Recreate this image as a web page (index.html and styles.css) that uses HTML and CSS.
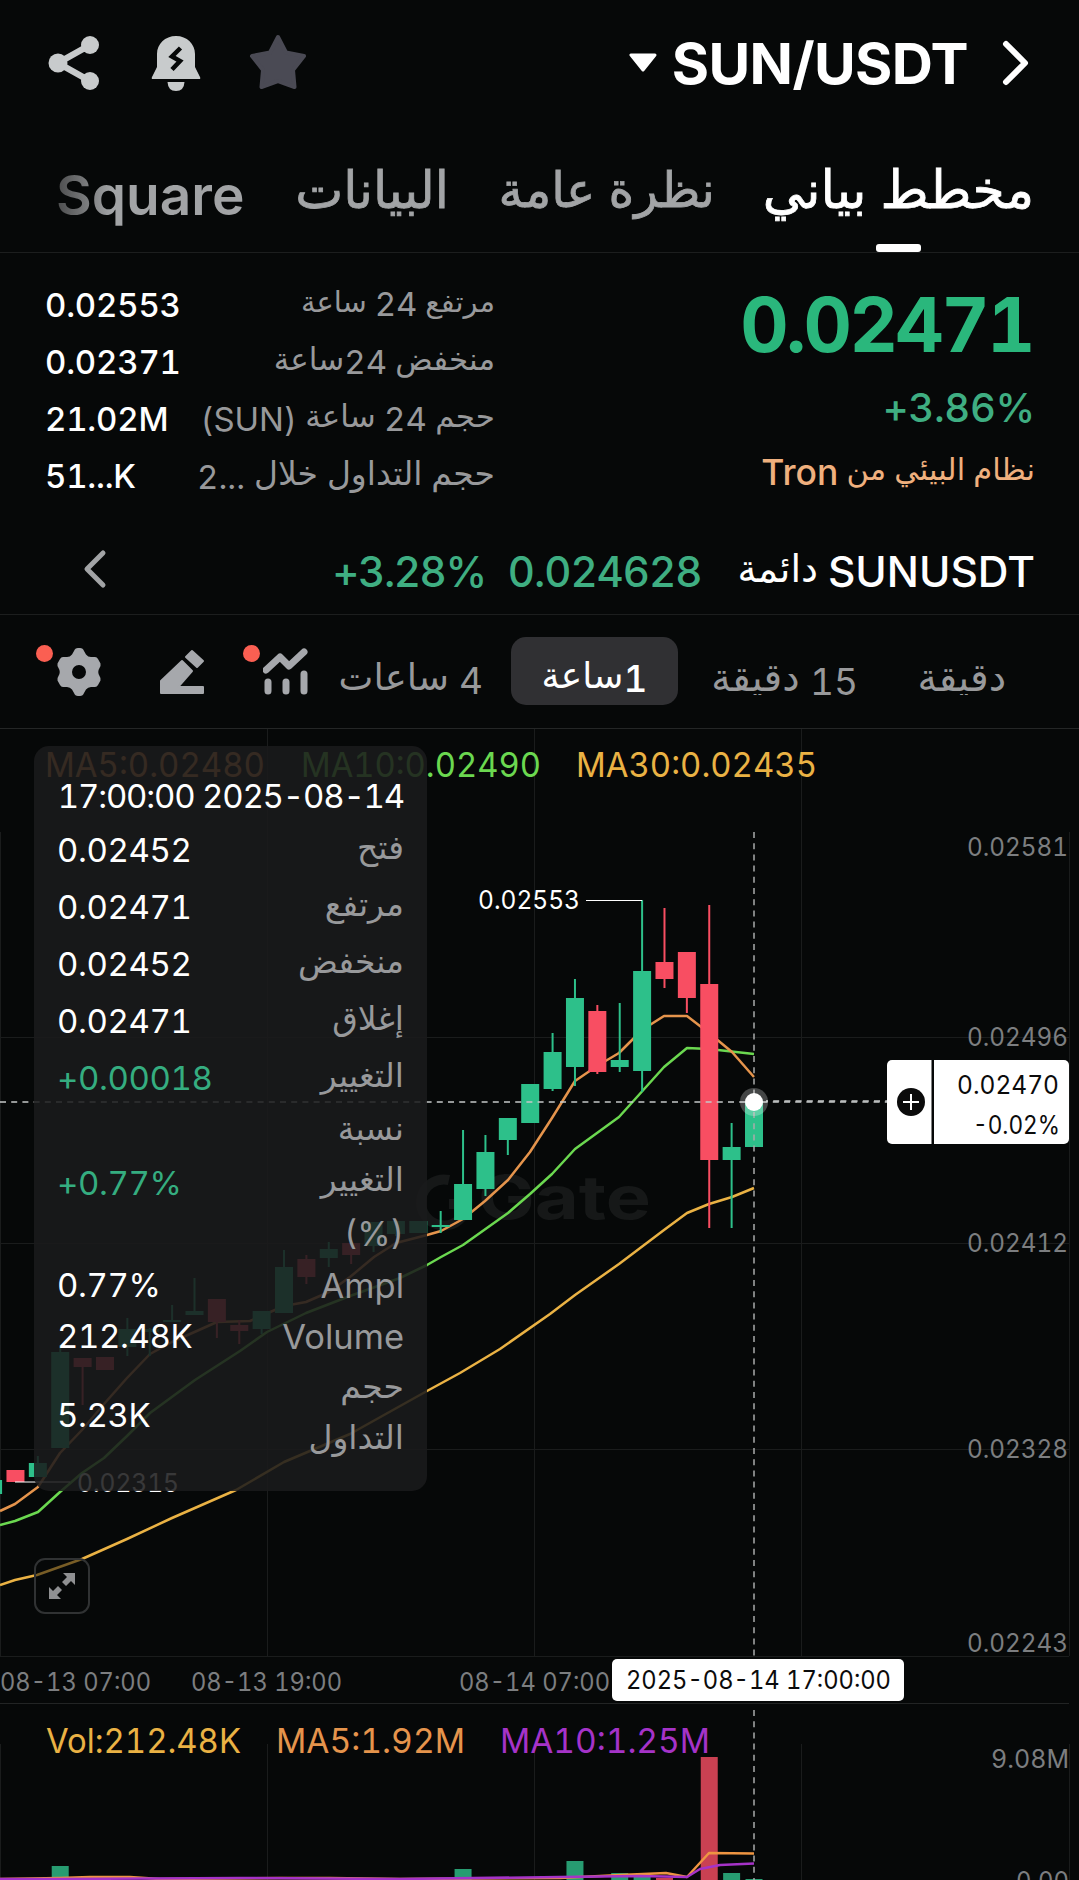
FILE: index.html
```html
<!DOCTYPE html>
<html lang="ar" dir="rtl">
<head>
    <meta charset="UTF-8">
    <meta name="viewport" content="width=device-width, initial-scale=1.0">
    <title>SUN/USDT</title>
    <link rel="stylesheet" href="styles.css">
</head>
<body>
    <header class="header">
        <svg class="back" width="30" height="46" viewBox="0 0 30 46"><path d="M5 4 L24 23 L5 42" /></svg>
        <h1 class="pair" dir="ltr">SUN/USDT</h1>
        <svg class="caret" width="28" height="20" viewBox="0 0 28 20"><path d="M2 2 H26 L14 17 Z" /></svg>
        <div class="header-icons">
            <svg width="58" height="58" viewBox="0 0 58 58" fill="#4a4a54" stroke="#4a4a54" stroke-width="4" stroke-linejoin="round"><path d="M29 3 L37 18.500 L55 22 L44 36 L45.500 53 L29 47 L12.500 53 L14 36 L3 22 L21 18.500 Z" /></svg>
            <svg class="bell" width="50" height="56" viewBox="0 0 50 56" fill="#c8cbcc">
                <path d="M25 1 C36 1 44 9 44 19 V32 L49 42 Q50 44 48 44 H2 Q0 44 1 42 L6 32 V19 C6 9 14 1 25 1 Z" />
                <path d="M16.500 47 H33.500 Q33 56 25 56 Q17 56 16.500 47 Z" />
                <path d="M29.500 13 L21 21.500 L29 26 L21 34.500" fill="none" stroke="#060808" stroke-width="4.500" />
            </svg>
            <svg class="share" width="52" height="56" viewBox="0 0 52 56" fill="#c8cbcc">
                <path d="M42 10 L10 28 L42 46" fill="none" stroke="#c8cbcc" stroke-width="6.500" />
                <circle cx="42" cy="10" r="9" /><circle cx="10" cy="28" r="9.500" /><circle cx="42" cy="46" r="9" />
            </svg>
        </div>
    </header>

    <nav class="tabs">
        <a class="tab active">مخطط بياني</a>
        <a class="tab overview">نظرة عامة</a>
        <a class="tab data">البيانات</a>
        <a class="tab square">Square</a>
    </nav>

    <section class="summary">
        <div class="price-box">
            <div class="price" dir="ltr">0.02471</div>
            <div class="change" dir="ltr">+3.86%</div>
            <div class="tag">نظام البيئي من <span class="latin">Tron</span></div>
        </div>
        <div class="stats">
            <div class="stat"><span class="label">مرتفع <span class="num">24</span> ساعة</span><b dir="ltr">0.02553</b></div>
            <div class="stat"><span class="label mid">منخفض <span class="num">24</span>ساعة</span><b dir="ltr">0.02371</b></div>
            <div class="stat"><span class="label mid">حجم <span class="num">24</span> ساعة <span class="num">(SUN)</span></span><b dir="ltr">21.02M</b></div>
            <div class="stat"><span class="label wide">حجم التداول خلال <span class="num" dir="ltr">2...</span></span><b dir="ltr">51...K</b></div>
        </div>
    </section>

    <section class="perp">
        <span class="perp-name">SUNUSDT</span>
        <span class="perp-type">دائمة</span>
        <span class="perp-price">0.024628</span>
        <span class="perp-change" dir="ltr">+3.28%</span>
        <svg class="perp-more" width="24" height="40" viewBox="0 0 24 40"><path d="M20 4 L4 20 L20 36" /></svg>
    </section>

    <section class="toolbar">
        <span class="period minute">دقيقة</span>
        <span class="period quarter"><span class="num">15</span> دقيقة</span>
        <span class="period selected"><span class="num">1</span>ساعة</span>
        <span class="period four"><span class="num">4</span> ساعات</span>
        <div class="tool tool-chart">
            <svg width="46" height="48" viewBox="0 0 46 48" fill="none" stroke="#a6a8ac">
                <path d="M3 22 L17 9 L26 18 L41 4" stroke-width="7" stroke-linecap="round" stroke-linejoin="round" />
                <path d="M5 34 V43 M23 34 V43 M41 26 V43" stroke-width="7" stroke-linecap="round" />
            </svg>
            <i class="dot"></i>
        </div>
        <div class="tool tool-pen">
            <svg width="46" height="48" viewBox="0 0 46 48" fill="#a6a8ac" stroke="#a6a8ac" stroke-width="2" stroke-linejoin="round">
                <path d="M1 45 V33 L22 13 L32 23 L18 39 H43 V45 Z" />
                <path d="M26 9 L32 3 L43 13 L37 19 Z" />
            </svg>
        </div>
        <div class="tool tool-gear">
            <svg width="46" height="48" viewBox="0 0 46 48">
                <path fill="#a6a8ac" fill-rule="evenodd" d="M18 3 Q19 0 22 0 H24 Q27 0 28 3 L30 6.500 Q32 9 35 9 H39 Q41 9 42 11 L44.500 15.500 Q45 18 43.500 20 Q41 24 43.500 28 Q45 30 44.500 32.500 L42 37 Q41 39 39 39 H35 Q32 39 30 41.500 L28 45 Q27 48 24 48 H22 Q19 48 18 45 L16 41.500 Q14 39 11 39 H7 Q5 39 4 37 L1.500 32.500 Q1 30 2.500 28 Q5 24 2.500 20 Q1 18 1.500 15.500 L4 11 Q5 9 7 9 H11 Q14 9 16 6.500 Z M23 17 A7 7 0 1 0 23 31 A7 7 0 1 0 23 17 Z" />
            </svg>
            <i class="dot"></i>
        </div>
    </section>

    <main class="chart-area" dir="ltr">
        <svg id="chart" class="chart" width="1079" height="1151" viewBox="0 729 1079 1151"></svg>

        <div class="tooltip" dir="rtl">
            <div class="tip-title" dir="ltr">17:00:00 2025-08-14</div>
            <div class="tip-row"><span>فتح</span><b dir="ltr">0.02452</b></div>
            <div class="tip-row"><span>مرتفع</span><b dir="ltr">0.02471</b></div>
            <div class="tip-row"><span>منخفض</span><b dir="ltr">0.02452</b></div>
            <div class="tip-row"><span>إغلاق</span><b dir="ltr">0.02471</b></div>
            <div class="tip-row"><span>التغيير</span><b class="up" dir="ltr">+0.00018</b></div>
            <div class="tip-row tall"><span>نسبة<br>التغيير<br><span class="percent">(%)</span></span><b class="up" dir="ltr">+0.77%</b></div>
            <div class="tip-row short"><span class="latin">Ampl</span><b dir="ltr">0.77%</b></div>
            <div class="tip-row short"><span class="latin">Volume</span><b dir="ltr">212.48K</b></div>
            <div class="tip-row double"><span>حجم<br>التداول</span><b dir="ltr">5.23K</b></div>
        </div>

        <button class="expand">
            <svg width="28" height="28" viewBox="0 0 28 28" fill="#8f9092">
                <path d="M15 1 H27 V13 L23 9 L18 14 L14 10 L19 5 Z" />
                <path d="M13 27 H1 V15 L5 19 L10 14 L14 18 L9 23 Z" />
            </svg>
        </button>
    </main>

    <script src="chart.js"></script>
</body>
</html>
```
FILE: styles.css
```css
* {
    box-sizing: border-box;
}

body {
    margin: 0;
    width: 1079px;
    height: 1880px;
    overflow: hidden;
    background-color: #060808;
    color: #fff;
    font-family: Inter, "DejaVu Sans", sans-serif;
    font-feature-settings: "tnum";
}

b {
    font-weight: 500;
}

.header {
    display: flex;
    align-items: center;
    height: 126px;
    padding: 0 48px 0 48px;
}

.back path {
    fill: none;
    stroke: #fff;
    stroke-width: 6;
    stroke-linecap: round;
    stroke-linejoin: round;
}

.pair {
    margin: 0 33px 0 0;
    padding-top: 2px;
    font-size: 57px;
    line-height: 70px;
    font-weight: 700;
    letter-spacing: -0.6px;
}

.caret {
    margin-right: 15px;
}

.caret path {
    fill: #fff;
    stroke: #fff;
    stroke-width: 3;
    stroke-linejoin: round;
}

.header-icons {
    display: flex;
    align-items: center;
    margin-right: auto;
}

.bell {
    margin-right: 48px;
}

.share {
    margin-right: 51px;
}

.tabs {
    display: flex;
    height: 127px;
    padding: 0 45px 0 56px;
    border-bottom: 1px solid #1c1e1e;
}

.tab {
    position: relative;
    height: 126px;
    line-height: 128px;
    font-size: 49px;
    font-weight: 400;
    -webkit-text-stroke: 0.8px currentColor;
    color: #a2a4a6;
    white-space: nowrap;
}

.tab.active {
    width: 271px;
    font-size: 52px;
    color: #fff;
}

.tab.active::after {
    content: "";
    position: absolute;
    left: 50%;
    bottom: 0;
    width: 45px;
    height: 8px;
    margin-left: -23px;
    border-radius: 3px;
    background-color: #fff;
}

.overview {
    width: 215px;
    margin-right: 48px;
}

.data {
    width: 154px;
    margin-right: 51px;
    font-size: 51px;
}

.square {
    margin-right: auto;
    font-size: 55px;
    line-height: 139px;
    font-weight: 600;
    -webkit-text-stroke: 0;
    background: linear-gradient(to right, #4a4b4c, #a2a4a6 56px);
    -webkit-background-clip: text;
    color: transparent;
}

.summary {
    display: flex;
    justify-content: space-between;
    height: 270px;
    padding: 22px 44px 0 45px;
}

.price {
    height: 102px;
    line-height: 100px;
    padding-right: 2px;
    font-size: 75px;
    font-weight: 700;
    letter-spacing: -2.6px;
    color: #2ab77c;
    text-align: right;
}

.change {
    height: 62px;
    line-height: 62px;
    font-size: 40px;
    font-weight: 500;
    letter-spacing: -0.3px;
    color: #3fae82;
    text-align: right;
}

.tag {
    height: 60px;
    line-height: 60px;
    font-size: 30.5px;
    color: #efb07e;
}

.tag .latin {
    font-size: 35.5px;
    font-weight: 500;
    vertical-align: -5px;
}

.stats {
    width: 450px;
}

.stat {
    display: flex;
    justify-content: space-between;
    height: 57px;
    line-height: 60px;
    font-size: 33px;
    letter-spacing: -0.2px;
    white-space: nowrap;
}

.label {
    margin-top: -3px;
    font-size: 29px;
    letter-spacing: 0;
    color: #98999b;
}

.label.mid {
    font-size: 31px;
}

.label.wide {
    font-size: 33px;
}

.num {
    font-size: 33px;
    vertical-align: -4px;
}

.perp {
    display: flex;
    align-items: center;
    height: 92px;
    padding: 5px 44px 0 83px;
    border-bottom: 1px solid #1c1e1e;
    font-size: 42.5px;
    font-weight: 500;
}

.perp-type {
    margin-right: 10px;
    padding-bottom: 7px;
    font-size: 38px;
}

.perp-price {
    margin-right: 36px;
    font-size: 42px;
    letter-spacing: -1px;
    color: #3fae82;
}

.perp-change {
    margin-right: 22px;
    font-size: 42px;
    letter-spacing: -1.4px;
    color: #3fae82;
}

.perp-more {
    margin-right: auto;
    margin-bottom: 5px;
}

.perp-more path {
    fill: none;
    stroke: #a2a4a6;
    stroke-width: 5;
    stroke-linecap: round;
    stroke-linejoin: round;
}

.toolbar {
    display: flex;
    align-items: center;
    height: 114px;
    padding: 0 73px 0 56px;
    border-bottom: 1px solid #242626;
}

.period {
    height: 46px;
    line-height: 55px;
    font-size: 37px;
    color: #98999b;
    white-space: nowrap;
}

.period .num {
    font-size: 37px;
    vertical-align: -4px;
}

.minute {
    width: 88px;
    font-size: 39px;
    overflow: hidden;
}

.quarter {
    width: 149px;
    margin-right: 60px;
    font-size: 39px;
    overflow: hidden;
}

.period.selected {
    width: 167px;
    height: 68px;
    line-height: 76px;
    margin-right: 31px;
    margin-bottom: 1px;
    border-radius: 15px;
    background-color: #303033;
    color: #fff;
    font-size: 36px;
    font-weight: 500;
    text-align: center;
}

.four {
    width: 141px;
    margin-right: 28px;
}

.tool {
    position: relative;
    height: 48px;
}

.tool-chart {
    margin-right: 33px;
}

.tool-pen {
    margin-right: 57px;
}

.tool-gear {
    margin-right: 58px;
}

.dot {
    position: absolute;
    left: -20px;
    top: -3px;
    width: 17px;
    height: 17px;
    border-radius: 50%;
    background-color: #fa5f52;
}

.chart-area {
    position: relative;
    height: 1151px;
}

.chart {
    display: block;
}

.chart text {
    font-family: Inter, sans-serif;
}

.tooltip {
    position: absolute;
    left: 34px;
    top: 17px;
    width: 393px;
    height: 745px;
    padding: 22px 23px 0 23px;
    border-radius: 15px;
    background-color: rgba(26, 26, 28, 0.87);
}

.tip-title {
    height: 54px;
    line-height: 56px;
    font-size: 33px;
    letter-spacing: -1.2px;
    text-align: right;
    white-space: nowrap;
}

.tip-row {
    display: flex;
    justify-content: space-between;
    align-items: center;
    height: 57px;
    line-height: 51px;
    font-size: 33px;
    color: #98999b;
}

.tip-row > span {
    padding-bottom: 6px;
}

.tip-row > .latin {
    padding-bottom: 0;
    font-size: 34.5px;
}

.percent {
    font-size: 34px;
    vertical-align: -4px;
}

.tip-row b {
    font-size: 33px;
    font-weight: 400;
    letter-spacing: -0.4px;
    color: #fff;
}

.tip-row .up {
    color: #35ad80;
}

.tip-row.tall {
    height: 153px;
}

.tip-row.short {
    height: 51px;
}

.tip-row.double {
    height: 106px;
}

.expand {
    position: absolute;
    left: 34px;
    top: 829px;
    width: 56px;
    height: 56px;
    padding: 12px;
    border: 2px solid #303233;
    border-radius: 11px;
    background-color: rgba(6, 8, 8, 0.5);
}

.expand svg {
    display: block;
}
```
FILE: chart.js
```js
const UP = '#2dc08a';
const DOWN = '#f84e62';
const STEP = 22.38;
const LAST_X = 754;

// newest first: [high, bodyTop, bodyBottom, low, direction]
const candles = [
    [1102, 1102, 1147, 1147, 1],
    [1123, 1147, 1160, 1228, 1],
    [905, 984, 1160, 1228, 0],
    [952, 952, 998, 1013, 0],
    [908, 962, 979, 988, 0],
    [900, 971, 1071, 1092, 1],
    [1003, 1060, 1067, 1072, 1],
    [1005, 1011, 1072, 1074, 0],
    [979, 998, 1067, 1086, 1],
    [1033, 1052, 1089, 1091, 1],
    [1084, 1084, 1123, 1123, 1],
    [1118, 1118, 1140, 1155, 1],
    [1135, 1152, 1189, 1196, 1],
    [1130, 1184, 1220, 1220, 1],
    [1211, 1225, 1227, 1233, 1],
    [1221, 1221, 1233, 1233, 1],
    [1221, 1221, 1234, 1236, 1],
    [1222, 1222, 1246, 1252, 1],
    [1243, 1243, 1255, 1264, 0],
    [1242, 1249, 1258, 1267, 1],
    [1255, 1259, 1277, 1284, 0],
    [1250, 1267, 1313, 1313, 1],
    [1311, 1311, 1329, 1334, 1],
    [1320, 1325, 1331, 1344, 0],
    [1299, 1299, 1322, 1338, 0],
    [1278, 1311, 1315, 1315, 1],
    [1305, 1320, 1322, 1322, 1],
    [1328, 1329, 1332, 1356, 1],
    [1318, 1329, 1347, 1356, 1],
    [1357, 1357, 1370, 1370, 0],
    [1358, 1358, 1367, 1405, 0],
    [1345, 1352, 1448, 1448, 1],
    [1456, 1463, 1477, 1477, 1],
    [1470, 1470, 1482, 1482, 0],
    [1480, 1480, 1494, 1494, 1]
];

const volumes = { 0: 1879, 1: 1873, 2: 1757, 4: 1878, 5: 1876, 6: 1873, 8: 1861, 13: 1869, 31: 1866 };

const ma5 = '0,1511 15,1504 38,1487 60,1453 82,1430 104,1404 127,1378 150,1354 172,1342 217,1322 250,1321 284,1306 306,1302 329,1292 350,1277 374,1257 396,1243 427,1235 441,1231 463,1219 485,1201 508,1180 530,1152 552,1118 575,1081 597,1066 619,1053 642,1030 664,1016 687,1016 709,1033 732,1052 754,1077';
const ma10 = '0,1525 15,1521 38,1512 60,1492 82,1473 104,1458 127,1436 150,1413 195,1380 240,1351 267,1332 306,1313 350,1296 400,1278 427,1265 441,1257 463,1245 508,1213 530,1194 552,1174 575,1149 619,1117 664,1067 687,1048 709,1049 754,1054';
const ma30 = '0,1585 15,1580 37,1575 82,1559 127,1539 172,1518 236,1490 284,1462 350,1434 427,1391 460,1373 500,1349 550,1314 575,1295 619,1264 664,1230 687,1213 709,1204 732,1197 754,1188';

const line = (x1, y1, x2, y2, color, extra = '') =>
    `<line x1="${x1}" y1="${y1}" x2="${x2}" y2="${y2}" stroke="${color}" ${extra}/>`;
const rect = (x, y, w, h, color, rx = 0) =>
    `<rect x="${x}" y="${y}" width="${w}" height="${h}" rx="${rx}" fill="${color}"/>`;
const curve = (points, color, width = 2.5) =>
    `<polyline points="${points}" fill="none" stroke="${color}" stroke-width="${width}" stroke-linejoin="round"/>`;
const text = (str, x, y, width, size, color) =>
    `<text x="${x}" y="${y}" font-size="${size}" fill="${color}" textLength="${width}" lengthAdjust="spacingAndGlyphs">${str}</text>`;

let out = '';

// grid
[0.5, 267.5, 534.5, 801.5, 1069.5].forEach(x => {
    const top = x === 0.5 || x === 1069.5 ? 832 : 729;
    out += line(x, top, x, 1656, '#1a1c1c') + line(x, 1744, x, 1880, '#1a1c1c');
});
[1037.5, 1243.5, 1449.5, 1656.5].forEach(y => out += line(0, y, 1069, y, '#1a1c1c'));
out += line(0, 1703.5, 1069, 1703.5, '#222424');

// watermark
out += '<path d="M449 1180 A23 23 0 1 0 467 1204 H449" fill="none" stroke="#161818" stroke-width="10"/>';
out += `<text x="478" y="1219" font-size="60" font-weight="700" fill="#161818" textLength="173" lengthAdjust="spacingAndGlyphs">Gate</text>`;

// moving averages
out += curve(ma30, '#eab244') + curve(ma10, '#6bd850') + curve(ma5, '#e5944c');

// candles
candles.forEach(([high, top, bottom, low, up], i) => {
    const x = LAST_X - i * STEP;
    const color = up ? UP : DOWN;
    out += line(x, high, x, low, color, 'stroke-width="2"');
    out += rect(x - 9, top, 18, bottom - top, color);
});

// volume
Object.keys(volumes).forEach(i => {
    const x = LAST_X - i * STEP;
    const color = candles[i][4] ? '#279c71' : '#c94152';
    out += rect(x - 8.5, volumes[i], 17, 1880 - volumes[i], color);
});
out += curve('0,1879 60,1878 90,1877 130,1877 160,1879 280,1878 330,1878 400,1879 560,1878 620,1875 666,1873 687,1877 709,1853 754,1853.5', '#ee9542');
out += curve('0,1879 60,1879 240,1878 400,1879 560,1877 640,1876 687,1877 700,1869 720,1865 754,1863.5', '#a533c8');

// high and low marks
out += line(586, 900.5, 642, 900.5, '#ffffff') + line(15, 1482, 70, 1482, '#ffffff');
out += text('0.02553', 478, 909, 102, 26, '#ffffff') + text('0.02315', 77, 1492, 102, 26, '#ffffff');

// crosshair
const dash = 'stroke-width="1.5" stroke-dasharray="6 5.200"';
out += line(754, 832, 754, 1656, '#a9abab', dash) + line(754, 1710, 754, 1880, '#a9abab', dash);
out += line(0, 1102, 887, 1102, '#c5c7c7', dash) + line(766, 1101, 887, 1101, '#c5c7c7', dash + ' stroke-dashoffset="4"');
out += '<circle cx="754" cy="1102" r="14" fill="#ffffff" fill-opacity="0.25"/><circle cx="754" cy="1102" r="9" fill="#ffffff"/>';

// indicator values
out += text('MA5:0.02480', 45, 777, 220, 34, '#e5944c');
out += text('MA10:0.02490', 301, 777, 240, 34, '#6bd850');
out += text('MA30:0.02435', 576, 777, 241, 34, '#eab244');
out += text('Vol:212.48K', 46, 1753, 195, 34, '#eab244');
out += text('MA5:1.92M', 276, 1753, 189, 34, '#e5944c');
out += text('MA10:1.25M', 500, 1753, 210, 34, '#a533c8');

// price axis
[['0.02581', 856], ['0.02496', 1046], ['0.02412', 1252], ['0.02328', 1458], ['0.02243', 1652]]
    .forEach(([label, y]) => out += text(label, 967, y, 101, 25, '#7c7e80'));
out += text('9.08M', 991, 1768, 78, 25, '#7c7e80') + text('0.00', 1016, 1890, 53, 25, '#7c7e80');

// time axis
out += text('08-13 07:00', 0, 1691, 151, 25, '#7c7e80');
out += text('08-13 19:00', 191, 1691, 151, 25, '#7c7e80');
out += text('08-14 07:00', 459, 1691, 151, 25, '#7c7e80');
out += rect(612, 1659, 292, 42, '#ffffff', 5);
out += text('2025-08-14 17:00:00', 626, 1689, 265, 25, '#0b0b0b');

// current price tag
out += rect(887, 1060, 182, 84, '#ffffff', 5) + rect(931.5, 1060, 2.5, 84, '#060808');
out += '<circle cx="911" cy="1102" r="14" fill="#0b0b0b"/>';
out += line(903, 1102, 919, 1102, '#ffffff', 'stroke-width="2"') + line(911, 1094, 911, 1110, '#ffffff', 'stroke-width="2"');
out += text('0.02470', 957, 1094, 102, 25, '#0b0b0b') + text('-0.02%', 973, 1134, 87, 25, '#0b0b0b');

document.getElementById('chart').innerHTML = out;
```
